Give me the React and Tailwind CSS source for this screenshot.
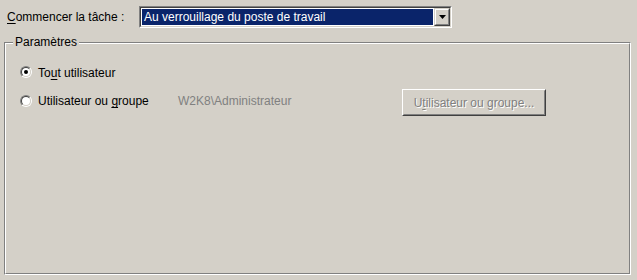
import React from "react";

const Radio = ({ checked }) => (
  <div className="w-[12px] h-[12px] rounded-full border border-t-[#808080] border-l-[#808080] border-b-white border-r-white">
    <div className="w-full h-full rounded-full border border-t-[#404040] border-l-[#404040] border-b-[#d4d0c8] border-r-[#d4d0c8] bg-white flex items-center justify-center">
      {checked && <div className="w-[4px] h-[4px] rounded-full bg-black" />}
    </div>
  </div>
);

export default function App() {
  return (
    <div className="w-[637px] h-[280px] bg-[#d4d0c8] text-[12px] leading-[14px] text-black font-['Liberation_Sans',Arial,sans-serif] overflow-hidden">
      {/* task row */}
      <div className="flex items-start pt-[6px] pl-[7px]">
        <div className="w-[132px] mt-[4px]">
          <span className="underline underline-offset-2">C</span>ommencer la tâche :
        </div>
        <div className="w-[313px] h-[22px] border border-t-[#808080] border-l-[#808080] border-b-white border-r-white">
          <div className="w-full h-full border border-t-[#404040] border-l-[#404040] border-b-[#d4d0c8] border-r-[#d4d0c8] bg-white flex">
            <div className="flex-1 m-[1px] mr-[1px] bg-[#0a246a] text-white leading-[16px] pl-[2px] whitespace-nowrap">
              Au verrouillage du poste de travail
            </div>
            <div className="w-[16px] h-full border border-t-[#d4d0c8] border-l-[#d4d0c8] border-b-[#404040] border-r-[#404040]">
              <div className="w-full h-full border border-t-white border-l-white border-b-[#808080] border-r-[#808080] bg-[#d4d0c8] flex items-center justify-center">
                <svg width="7" height="4" viewBox="0 0 7 4">
                  <path d="M0 0h7L3.5 4z" fill="#000" />
                </svg>
              </div>
            </div>
          </div>
        </div>
      </div>

      {/* group box */}
      <div className="relative ml-[4px] mt-[14px] w-[627px] h-[233px] border border-t-[#808080] border-l-[#808080] border-b-white border-r-white">
        <span className="absolute left-[8px] -top-[8px] px-[2px] bg-[#d4d0c8] leading-[14px]">
          Paramètres
        </span>
        <div className="w-full h-full border border-t-white border-l-white border-b-[#808080] border-r-[#808080] pt-[22px] pl-[14px]">
          <div className="flex items-start h-[14px]">
            <Radio checked />
            <span className="ml-[6px]">
              To<span className="underline underline-offset-2">u</span>t utilisateur
            </span>
          </div>
          <div className="flex items-start mt-[9px]">
            <div className="mt-[6px]">
              <Radio />
            </div>
            <span className="ml-[6px] w-[140px] mt-[5px]">
              Utilisateur ou <span className="underline underline-offset-2">g</span>roupe
            </span>
            <span className="w-[224px] mt-[5px] text-[#808080]">W2K8\Administrateur</span>
            <div className="w-[144px] h-[27px] border border-t-white border-l-white border-b-[#404040] border-r-[#404040]">
              <div className="w-full h-full border border-t-[#d4d0c8] border-l-[#d4d0c8] border-b-[#808080] border-r-[#808080] flex items-center justify-center text-[#808080] [text-shadow:1px_1px_0_#fff]">
                U<span className="underline underline-offset-2">t</span>ilisateur ou groupe...
              </div>
            </div>
          </div>
        </div>
      </div>
    </div>
  );
}
